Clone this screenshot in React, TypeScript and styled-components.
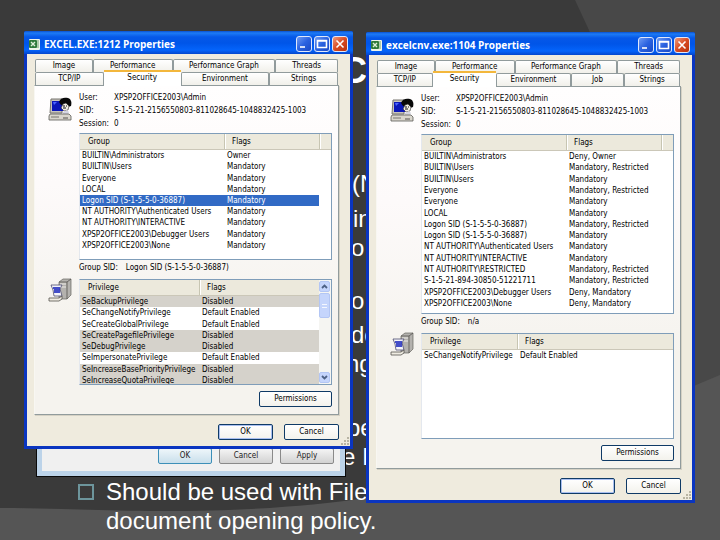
import React from "react";
import styled, { createGlobalStyle, css } from "styled-components";

const uiFont = `"DejaVu Sans Condensed", "DejaVu Sans", sans-serif`;

const GlobalStyle = createGlobalStyle`
  *, *::before, *::after { box-sizing: border-box; }
  body { margin: 0; background: #3a3a3a; }
  button { font: inherit; color: inherit; padding: 0; margin: 0; cursor: default; }
`;

/* ---------- slide ---------- */

const Slide = styled.main`
  position: relative;
  min-height: 100vh;
  overflow: hidden;
  background: #3a3a3a;
  color: #fff;
  font-family: "Liberation Sans", Arial, sans-serif;
`;

const Backdrop = styled.svg`
  position: absolute;
  inset: 0;
  width: 100%;
  height: 100%;
`;

const SlideText = styled.div`
  position: relative;
  padding-top: 50px;
  white-space: nowrap;
`;

const SlideTitle = styled.h1`
  margin: 0 0 77px;
  padding-left: 341px;
  font-size: 36px;
  line-height: 42px;
  font-weight: 700;
`;

const Line = styled.p<{ $indent: number; $gap?: number }>`
  margin: ${(p) => p.$gap ?? 0}px 0 0;
  padding-left: ${(p) => p.$indent}px;
  font-size: 24px;
  line-height: 29px;
`;

const BulletLine = styled(Line)`
  display: flex;
  align-items: center;
  gap: 12px;
`;

const Bullet = styled.span`
  width: 16px;
  height: 16px;
  border: 2px solid #6d959c;
`;

/* ---------- glass dialog behind ---------- */

const GlassDialog = styled.section`
  position: absolute;
  left: 36px;
  top: 420px;
  width: 310px;
  padding: 0 5px 5px;
  border: 1px solid #0a0a0a;
  background: #bcd3e9;
  font: 8px/10px ${uiFont};
  color: #222;
`;

const GlassBody = styled.div`
  display: flex;
  justify-content: flex-end;
  gap: 7px;
  padding: 27px 6px 7px;
  background: #f0f0f0;
`;

const GlassButton = styled.button<{ $primary?: boolean }>`
  width: 54px;
  height: 16px;
  border: 1px solid ${(p) => (p.$primary ? "#3c8fb8" : "#8a8a8a")};
  border-radius: 2px;
  background: ${(p) =>
    p.$primary
      ? "linear-gradient(#eef6fa, #c9dfeb)"
      : "linear-gradient(#f4f4f4, #d2d2d2)"};
`;

/* ---------- property window ---------- */

const WindowFrame = styled.section<{ $left: number; $top: number; $height: number }>`
  position: absolute;
  left: ${(p) => p.$left}px;
  top: ${(p) => p.$top}px;
  width: 329px;
  min-height: ${(p) => p.$height}px;
  display: flex;
  flex-direction: column;
  border: solid #0a35c0;
  border-width: 0 3px 3px;
  border-radius: 2px 2px 0 0;
  background: #efebde;
  color: #000;
  font: 8px/10px ${uiFont};
  white-space: nowrap;
`;

const TitleBar = styled.header`
  display: flex;
  align-items: center;
  gap: 4px;
  height: 23px;
  margin: 0 -3px;
  padding: 2px 5px 0 4px;
  border-radius: 2px 2px 0 0;
  background: linear-gradient(#0a50cf 0, #1d7bf5 2px, #0658e8 6px, #0055e8 12px, #0464fb 19px, #0346cd 23px);
`;

const TitleText = styled.h2`
  flex: 1;
  margin: 0;
  font: bold 10px/12px "Open Sans", sans-serif;
  color: #fff;
`;

const Captions = styled.div`
  display: flex;
  gap: 2px;
`;

const CaptionButton = styled.button<{ $close?: boolean }>`
  display: block;
  width: 16px;
  height: 16px;
  border: 1px solid #dfe8fb;
  border-radius: 3px;
  background: ${(p) =>
    p.$close
      ? "linear-gradient(135deg, #ee9a7c, #d84a22 50%, #b8320c)"
      : "linear-gradient(135deg, #6f9bf3, #2a62e0 50%, #1a49c4)"};
`;

const WindowBody = styled.div`
  position: relative;
  flex: 1;
  display: flex;
  flex-direction: column;
  padding: 5px 11px 6px 7px;
`;

const TabRow = styled.div<{ $cols: string }>`
  display: grid;
  grid-template-columns: ${(p) => p.$cols};
  height: 13px;
  padding-left: 1px;
  padding-right: 1px;
`;

const Tab = styled.button<{ $active?: boolean }>`
  border: 1px solid #919b9c;
  border-bottom: 0;
  border-radius: 2px 2px 0 0;
  background: linear-gradient(#fff, #f1f0ea);
  line-height: 12px;
  ${(p) =>
    p.$active &&
    css`
      z-index: 1;
      margin-top: -2px;
      margin-bottom: -1px;
      padding-bottom: 2px;
      border: 0;
      border-top: 2px solid #f3b73c;
      border-radius: 0;
      background: #fff;
    `}
`;

const Pane = styled.div`
  flex: 1;
  display: flex;
  flex-direction: column;
  padding: 6px 6px 7px 13px;
  border: 1px solid #919b9c;
  border-left-color: #f8f7f2;
  box-shadow: 1px 1px 0 #d5d1c4;
  background: linear-gradient(#fffefe, #fdfafa 30%, #f5f3ee 70%);
`;

const IconRow = styled.div`
  display: grid;
  grid-template-columns: 24px 1fr;
  column-gap: 7px;
`;

const IconCell = styled.div`
  padding-top: 5px;
`;

const Details = styled.dl`
  display: grid;
  grid-template-columns: 35px 1fr;
  grid-auto-rows: 13px;
  margin: 0;
  line-height: 11px;
  dt, dd { margin: 0; }
`;

const ListFrame = styled.div<{ $height: number; $mt?: number }>`
  display: flex;
  height: ${(p) => p.$height}px;
  margin-top: ${(p) => p.$mt ?? 0}px;
  overflow: hidden;
  border: 1px solid #7f9db9;
  border-left-color: #e4e8ee;
  background: #fff;
`;

const ListTable = styled.table<{ $height: number }>`
  flex: 1;
  width: 100%;
  height: ${(p) => p.$height}px;
  table-layout: fixed;
  border-collapse: separate;
  border-spacing: 0;
  line-height: 11px;
  th, td { padding: 0; text-align: left; overflow: hidden; font-weight: 400; }
  th {
    height: 16px;
    padding-left: 8px;
    border-bottom: 1px solid #cbc7b8;
    background: #ece9dc;
  }
  th + th { box-shadow: inset 1px 0 0 #c7c5b2, inset 2px 0 0 #fff; }
  td { padding-left: 2px; }
  td + td { padding-left: 3px; }
`;

const Col = styled.col<{ $w: number }>`
  width: ${(p) => p.$w}px;
`;

const Row = styled.tr<{ $tone?: Tone }>`
  td:not(:nth-child(3)) {
    ${(p) => p.$tone === "selected" && "background: #316ac5; color: #fff;"}
    ${(p) => p.$tone === "disabled" && "background: #d5d2cb;"}
  }
`;

const ScrollBar = styled.div`
  display: flex;
  flex-direction: column;
  width: 12px;
  height: 100%;
  padding: 1px 0;
  background: #f5f5f2;
`;

const ScrollPart = styled.button<{ $h: number }>`
  display: block;
  width: 11px;
  height: ${(p) => p.$h}px;
  border: 1px solid #b3c6f4;
  border-radius: 2px;
  background: #c5d5fc;
  line-height: 0;
`;

const Track = styled.div`
  flex: 1;
  padding-top: 1px;
`;

const GroupSid = styled.p`
  display: flex;
  gap: 8px;
  margin: 2px 0 0;
  line-height: 11px;
`;

const ButtonRow = styled.div<{ $mt: number }>`
  display: flex;
  justify-content: flex-end;
  gap: 11px;
  margin-top: ${(p) => p.$mt}px;
`;

const PushButton = styled.button<{ $wide?: boolean; $primary?: boolean }>`
  width: ${(p) => (p.$wide ? 73 : 55)}px;
  height: 16px;
  border: 1px solid #0f3a66;
  border-radius: 2px;
  background: linear-gradient(#fff, #f3f2ec);
  box-shadow: ${(p) => (p.$primary ? "inset 0 0 0 1px #a9bff0" : "none")};
`;

const Grip = styled.svg`
  position: absolute;
  right: 0;
  bottom: 0;
  width: 9px;
  height: 9px;
`;

/* ---------- icons ---------- */

const ExcelIcon = () => (
  <svg width="12" height="12" viewBox="0 0 12 12" aria-hidden="true">
    <rect x="1" y="1" width="11" height="11" rx="1" fill="#eef5ea" />
    <path d="M9 3h2M9 5h2M9 7h2M9 9h2" stroke="#6ea36a" />
    <rect x="1" y="2" width="8" height="8" rx="1" fill="#2f7a3b" />
    <path d="M3 4l4 4M7 4L3 8" stroke="#dff0da" strokeWidth="1.400" />
  </svg>
);

const UserIcon = () => (
  <svg width="24" height="24" viewBox="0 0 24 24" aria-hidden="true">
    <path d="M3 2h11v14H2z" fill="#c8c5bd" stroke="#77756f" />
    <path d="M4 4h11v10H4z" fill="#0a17b8" />
    <path d="M5 5h4l-3 3z" fill="#4c66ff" />
    <path d="M11 5c1-4 5-5 9-4 3 1 4 4 3 8l-3 1-7-2z" fill="#080808" />
    <path d="M15 7l3-1 3 3-1 4-4 1-3-3z" fill="#f2eee4" stroke="#222" strokeWidth=".6" />
    <path d="M15 9h2M18 9h1M15 11h3" stroke="#111" />
    <path d="M15 15l4-2 2 2-1 2h-5z" fill="#d6d6e2" />
    <path d="M2 17h19l2 2v4H1v-4z" fill="#d9d6cd" stroke="#5c5a55" strokeWidth=".8" />
    <path d="M3 20h8" stroke="#77756f" />
    <path d="M15 21h5" stroke="#55534f" />
  </svg>
);

const ServerIcon = () => (
  <svg width="24" height="24" viewBox="0 0 24 24" aria-hidden="true">
    <path d="M11 4l4-3h8v16l-4 4h-8z" fill="#b4b2ae" stroke="#66645f" strokeWidth=".7" />
    <path d="M11 4h8v17M19 4l4-3" fill="none" stroke="#55534f" strokeWidth=".8" />
    <path d="M12 6h6M12 9h6" stroke="#eceae5" />
    <path d="M3 7h11l-2 4 2 7H6l-1-6z" fill="#f4f4fa" stroke="#4b4b70" strokeWidth=".8" />
    <path d="M5 10h7M6 12h6M6 14h6" stroke="#0a17b8" strokeWidth="1.400" />
    <path d="M1 20h10l3-2v3l-3 2H1z" fill="#efece2" stroke="#55534f" strokeWidth=".8" />
  </svg>
);

const Chevron = ({ up }: { up?: boolean }) => (
  <svg width="9" height="9" viewBox="0 0 9 9" aria-hidden="true">
    <path d={up ? "M2 6l2.500-2.500L7 6" : "M2 3l2.500 2.500L7 3"} fill="none" stroke="#4d6185" strokeWidth="1.800" />
  </svg>
);

const captionPaths: Record<string, string> = {
  Minimize: "M3 10h5",
  Maximize: "M2.500 3.500h9v7h-9zM2 4h10",
  Close: "M3.500 3.500l7 7M10.500 3.500l-7 7",
};

/* ---------- data ---------- */

type Tone = "selected" | "disabled";
type Entry = [string, string, Tone?];

interface WindowData {
  title: string;
  place: { left: number; top: number; height: number };
  tabs: { cols: string; names: string[] }[];
  groups: { height: number; rows: Entry[]; split: number };
  groupSid: string;
  privileges: { rows: Entry[]; split: number; height: number; gap: number; scroll?: boolean };
}

const topTabs = { cols: "58fr 80fr 103fr 63fr", names: ["Image", "Performance", "Performance Graph", "Threads"] };

const excel: WindowData = {
  title: "EXCEL.EXE:1212 Properties",
  place: { left: 24, top: 31, height: 418 },
  tabs: [topTabs, { cols: "69fr 77fr 89fr 69fr", names: ["TCP/IP", "Security", "Environment", "Strings"] }],
  groups: {
    height: 127,
    split: 144,
    rows: [
      ["BUILTIN\\Administrators", "Owner"],
      ["BUILTIN\\Users", "Mandatory"],
      ["Everyone", "Mandatory"],
      ["LOCAL", "Mandatory"],
      ["Logon SID (S-1-5-5-0-36887)", "Mandatory", "selected"],
      ["NT AUTHORITY\\Authenticated Users", "Mandatory"],
      ["NT AUTHORITY\\INTERACTIVE", "Mandatory"],
      ["XPSP2OFFICE2003\\Debugger Users", "Mandatory"],
      ["XPSP2OFFICE2003\\None", "Mandatory"],
    ],
  },
  groupSid: "Logon SID (S-1-5-5-0-36887)",
  privileges: {
    split: 119,
    height: 106,
    gap: 6,
    scroll: true,
    rows: [
      ["SeBackupPrivilege", "Disabled", "disabled"],
      ["SeChangeNotifyPrivilege", "Default Enabled"],
      ["SeCreateGlobalPrivilege", "Default Enabled"],
      ["SeCreatePagefilePrivilege", "Disabled", "disabled"],
      ["SeDebugPrivilege", "Disabled", "disabled"],
      ["SeImpersonatePrivilege", "Default Enabled"],
      ["SeIncreaseBasePriorityPrivilege", "Disabled", "disabled"],
      ["SeIncreaseQuotaPrivilege", "Disabled", "disabled"],
    ],
  },
};

const excelcnv: WindowData = {
  title: "excelcnv.exe:1104 Properties",
  place: { left: 366, top: 32, height: 471 },
  tabs: [topTabs, { cols: "56fr 64fr 75fr 54fr 56fr", names: ["TCP/IP", "Security", "Environment", "Job", "Strings"] }],
  groups: {
    height: 180,
    split: 144,
    rows: [
      ["BUILTIN\\Administrators", "Deny, Owner"],
      ["BUILTIN\\Users", "Mandatory, Restricted"],
      ["BUILTIN\\Users", "Mandatory"],
      ["Everyone", "Mandatory, Restricted"],
      ["Everyone", "Mandatory"],
      ["LOCAL", "Mandatory"],
      ["Logon SID (S-1-5-5-0-36887)", "Mandatory, Restricted"],
      ["Logon SID (S-1-5-5-0-36887)", "Mandatory"],
      ["NT AUTHORITY\\Authenticated Users", "Mandatory"],
      ["NT AUTHORITY\\INTERACTIVE", "Mandatory"],
      ["NT AUTHORITY\\RESTRICTED", "Mandatory, Restricted"],
      ["S-1-5-21-894-30850-51221711", "Mandatory, Restricted"],
      ["XPSP2OFFICE2003\\Debugger Users", "Deny, Mandatory"],
      ["XPSP2OFFICE2003\\None", "Deny, Mandatory"],
    ],
  },
  groupSid: "n/a",
  privileges: {
    split: 95,
    height: 106,
    gap: 6,
    rows: [["SeChangeNotifyPrivilege", "Default Enabled"]],
  },
};

/* ---------- parts ---------- */

interface ListProps {
  label: string;
  rows: Entry[];
  split: number;
  flagsEnd: number;
}

function EntryList({ label, rows, split, flagsEnd }: ListProps) {
  const filler = flagsEnd > 0;
  return (
    <ListTable $height={16 + Math.round(rows.length * 11.25)}>
      <colgroup>
        <Col $w={split} />
        {filler ? <Col $w={flagsEnd - split} /> : <col />}
        {filler && <col />}
      </colgroup>
      <thead>
        <tr>
          <th scope="col">{label}</th>
          <th scope="col">Flags</th>
          {filler && <th aria-hidden="true" />}
        </tr>
      </thead>
      <tbody>
        {rows.map(([name, flags, tone], i) => (
          <Row key={i} $tone={tone}>
            <td>{name}</td>
            <td>{flags}</td>
            {filler && <td />}
          </Row>
        ))}
      </tbody>
    </ListTable>
  );
}

function PropertiesWindow({ data }: { data: WindowData }) {
  const { place, groups, privileges } = data;
  return (
    <WindowFrame $left={place.left} $top={place.top} $height={place.height} aria-label={data.title}>
      <TitleBar>
        <ExcelIcon />
        <TitleText>{data.title}</TitleText>
        <Captions>
          {Object.keys(captionPaths).map((name) => (
            <CaptionButton key={name} aria-label={name} $close={name === "Close"}>
              <svg width="14" height="14" viewBox="0 0 14 14" aria-hidden="true">
                <path d={captionPaths[name]} fill="none" stroke="#fff" strokeWidth="1.600" />
              </svg>
            </CaptionButton>
          ))}
        </Captions>
      </TitleBar>
      <WindowBody>
        {data.tabs.map((row, i) => (
          <TabRow key={i} $cols={row.cols} role="tablist">
            {row.names.map((name) => (
              <Tab key={name} role="tab" aria-selected={name === "Security"} $active={name === "Security"}>
                {name}
              </Tab>
            ))}
          </TabRow>
        ))}
        <Pane>
          <IconRow>
            <IconCell>
              <UserIcon />
            </IconCell>
            <div>
              <Details>
                <dt>User:</dt>
                <dd>XPSP2OFFICE2003\Admin</dd>
                <dt>SID:</dt>
                <dd>S-1-5-21-2156550803-811028645-1048832425-1003</dd>
                <dt>Session:</dt>
                <dd>0</dd>
              </Details>
              <ListFrame $height={groups.height} $mt={2}>
                <EntryList label="Group" rows={groups.rows} split={groups.split} flagsEnd={239} />
              </ListFrame>
              <GroupSid>
                <span>Group SID:</span>
                <span>{data.groupSid}</span>
              </GroupSid>
            </div>
          </IconRow>
          <IconRow>
            <IconCell>
              <ServerIcon />
            </IconCell>
            <ListFrame $height={privileges.height} $mt={privileges.gap}>
              <EntryList
                label="Privilege"
                rows={privileges.rows}
                split={privileges.split}
                flagsEnd={0}
              />
              {privileges.scroll && (
                <ScrollBar>
                  <ScrollPart $h={11} aria-label="Scroll up">
                    <Chevron up />
                  </ScrollPart>
                  <Track>
                    <ScrollPart $h={25} aria-label="Scroll position">
                      <svg width="9" height="9" viewBox="0 0 9 9" aria-hidden="true">
                        <path d="M2 3.500h5M2 6.500h5" stroke="#f4f7ff" />
                      </svg>
                    </ScrollPart>
                  </Track>
                  <ScrollPart $h={11} aria-label="Scroll down">
                    <Chevron />
                  </ScrollPart>
                </ScrollBar>
              )}
            </ListFrame>
          </IconRow>
          <ButtonRow $mt={6}>
            <PushButton $wide>Permissions</PushButton>
          </ButtonRow>
        </Pane>
        <ButtonRow $mt={9}>
          <PushButton $primary>OK</PushButton>
          <PushButton>Cancel</PushButton>
        </ButtonRow>
        <Grip viewBox="0 0 9 9" aria-hidden="true">
          <path d="M6 0h2v2H6zM3 3h2v2H3zM6 3h2v2H6zM0 6h2v2H0zM3 6h2v2H3zM6 6h2v2H6z" fill="#b8b4a3" />
        </Grip>
      </WindowBody>
    </WindowFrame>
  );
}

export default function App() {
  return (
    <Slide>
      <GlobalStyle />
      <Backdrop viewBox="0 0 720 540" preserveAspectRatio="none" aria-hidden="true">
        <path d="M575 0H720V400H650L640 140Z" fill="#484848" />
        <path d="M0 508C60 508 100 511 160 511C250 511 310 506 366 498C500 474 610 420 720 375V540H0Z" fill="#555" />
      </Backdrop>
      <SlideText>
        <SlideTitle>C</SlideTitle>
        <Line $indent={352}>(N</Line>
        <Line $indent={353} $gap={6}>in</Line>
        <Line $indent={351}>o</Line>
        <Line $indent={351} $gap={24}>o</Line>
        <Line $indent={351} $gap={5}>de</Line>
        <Line $indent={346}>ng</Line>
        <Line $indent={347} $gap={35}>be</Line>
        <Line $indent={342}>e I</Line>
        <BulletLine $indent={78} $gap={6}>
          <Bullet />
          Should be used with File Block
        </BulletLine>
        <Line $indent={106}>document opening policy.</Line>
      </SlideText>
      <GlassDialog aria-label="Settings">
        <GlassBody>
          <GlassButton $primary>OK</GlassButton>
          <GlassButton>Cancel</GlassButton>
          <GlassButton>Apply</GlassButton>
        </GlassBody>
      </GlassDialog>
      <PropertiesWindow data={excel} />
      <PropertiesWindow data={excelcnv} />
    </Slide>
  );
}
